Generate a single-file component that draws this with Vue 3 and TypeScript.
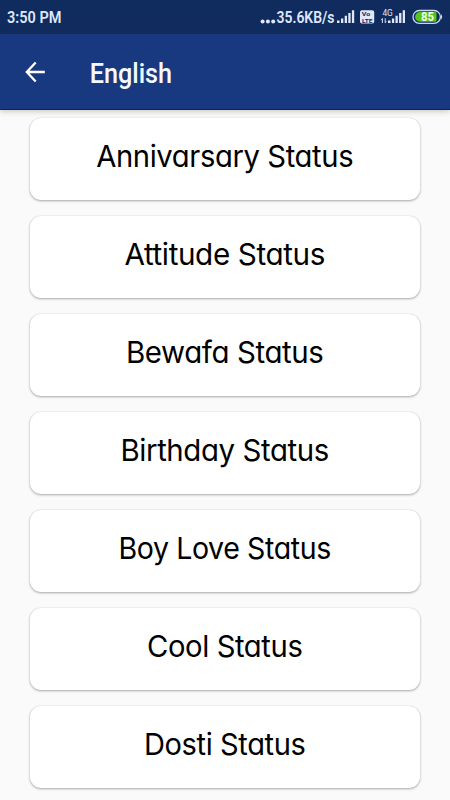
<script setup lang="ts">
interface Category {
  name: string
  width: number
}

const categories: Category[] = [
  { name: 'Annivarsary Status', width: 257 },
  { name: 'Attitude Status', width: 200.5 },
  { name: 'Bewafa Status', width: 197.5 },
  { name: 'Birthday Status', width: 208.5 },
  { name: 'Boy Love Status', width: 212.5 },
  { name: 'Cool Status', width: 155.5 },
  { name: 'Dosti Status', width: 161.5 },
]
</script>

<template>
  <div class="screen">
    <header class="status-bar">
      <svg class="time" width="70" height="34" viewBox="0 0 70 34">
        <text x="7" y="23.3" textLength="54.5" lengthAdjust="spacingAndGlyphs">3:50 PM</text>
      </svg>
      <svg class="indicators" width="200" height="34" viewBox="250 0 200 34">
        <g fill="#dfe8fb">
          <circle cx="262.6" cy="21.5" r="2" />
          <circle cx="267.9" cy="21.5" r="2" />
          <circle cx="273.2" cy="21.5" r="2" />
        </g>
        <text class="speed" x="276.5" y="23.3" textLength="58" lengthAdjust="spacingAndGlyphs">35.6KB/s</text>
        <path
          class="bars"
          d="M337 20.5h2.5v2.5h-2.5zM341 18.5h2.3v4.5h-2.3zM344.7 15.8h2.3v7.2h-2.3zM348.3 13h2.3v10h-2.3zM351.9 10.3h2.3v12.7h-2.3z"
        />
        <rect x="360" y="10.3" width="14.2" height="13.2" rx="2" fill="#dfe8fb" />
        <text class="volte" x="361.8" y="16" textLength="8.5" lengthAdjust="spacingAndGlyphs">Vo</text>
        <text class="volte" x="362" y="22.5" textLength="10.5" lengthAdjust="spacingAndGlyphs">LTE</text>
        <text class="network" x="382.4" y="15.6" textLength="10.4" lengthAdjust="spacingAndGlyphs">4G</text>
        <path d="M382.4 23v-4.3M382.5 18.4l-1.2 1.7M385.2 18.3v4.3M385.1 22.9l1.2-1.7" stroke="#cfdcf5" stroke-width="1" fill="none" />
        <path
          class="bars"
          d="M388 20.5h2.5v2.5h-2.5zM391.9 18.5h2.3v4.5h-2.3zM395.5 15.8h2.3v7.2h-2.3zM399.1 13h2.3v10h-2.3zM402.7 10.3h2.3v12.7h-2.3z"
        />
        <rect x="413" y="10.5" width="27.4" height="12.8" rx="6.4" fill="#0f2c61" stroke="#c9d8ee" stroke-width="1.3" />
        <path d="M441 14.2q2.4 2.7 0 5.4z" fill="#c9d8ee" />
        <path d="M420 12H434.5q2 0 2 1.4v7q0 1.4-2 1.4H420a4.9 4.9 0 0 1 0-9.8z" fill="#56c41b" />
        <text class="charge" x="421" y="21.3" textLength="13" lengthAdjust="spacingAndGlyphs">85</text>
      </svg>
    </header>

    <nav class="app-bar">
      <button class="back" type="button" aria-label="Back">
        <svg width="22" height="24" viewBox="0 0 22 24">
          <path d="M20.8 12H3M11.7 2.5L2.8 12l8.9 9.5" fill="none" stroke="#fff" stroke-width="2.3" />
        </svg>
      </button>
      <svg class="title" width="100" height="76" viewBox="0 0 100 76">
        <text x="-0.3" y="48.8" textLength="82.3" lengthAdjust="spacingAndGlyphs">English</text>
      </svg>
    </nav>

    <main class="list">
      <article v-for="category in categories" :key="category.name" class="card">
        <svg class="label" width="390" height="82" viewBox="0 0 390 82">
          <text
            x="194.7"
            y="48.8"
            text-anchor="middle"
            :textLength="category.width"
            lengthAdjust="spacingAndGlyphs"
          >{{ category.name }}</text>
        </svg>
      </article>
    </main>
  </div>
</template>

<style>
body {
  margin: 0;
  background: #fafafa;
}
</style>

<style scoped>
.screen {
  display: flex;
  flex-direction: column;
  width: 450px;
  height: 800px;
  overflow: hidden;
  background: #fafafa;
}

svg {
  display: block;
}

.status-bar {
  display: flex;
  flex: none;
  justify-content: space-between;
  height: 34px;
  background: #102b5e;
}

.status-bar text {
  font-family: Roboto, 'Liberation Sans', sans-serif;
  font-size: 16.5px;
  font-weight: 600;
  fill: #dfe8fb;
}

.bars {
  fill: #dfe8fb;
}

.status-bar .volte {
  font-size: 6px;
  font-weight: 700;
  fill: #102b5e;
}

.status-bar .network {
  font-size: 8.5px;
  font-weight: 400;
}

.status-bar .charge {
  font-size: 13px;
  font-weight: 700;
  fill: #f1ffe8;
}

.app-bar {
  display: flex;
  flex: none;
  align-items: center;
  box-sizing: border-box;
  height: 76px;
  padding-left: 24px;
  gap: 44px;
  background: #18397f;
  border-bottom: 1px solid #0b2068;
  box-shadow: 0 1px 6px rgba(60, 55, 25, 0.3);
}

.back {
  padding: 0;
  border: 0;
  background: none;
}

.title text {
  font-family: Roboto, 'Liberation Sans', sans-serif;
  font-size: 28px;
  font-weight: 500;
  fill: #f4f9ff;
}

.list {
  display: flex;
  flex-direction: column;
  gap: 16px;
  padding: 8.4px 30px 0;
}

.card {
  flex: none;
  height: 82px;
  border-radius: 11px;
  background: #fff;
  box-shadow: 0 1px 2.5px rgba(0, 0, 0, 0.32), 0 0 1px rgba(0, 0, 0, 0.16);
}

.label text {
  font-family: Inter, 'Noto Sans', sans-serif;
  font-size: 30px;
  font-weight: 400;
  font-feature-settings: 'cv11' 1;
  letter-spacing: -0.4px;
  fill: #000;
}
</style>
